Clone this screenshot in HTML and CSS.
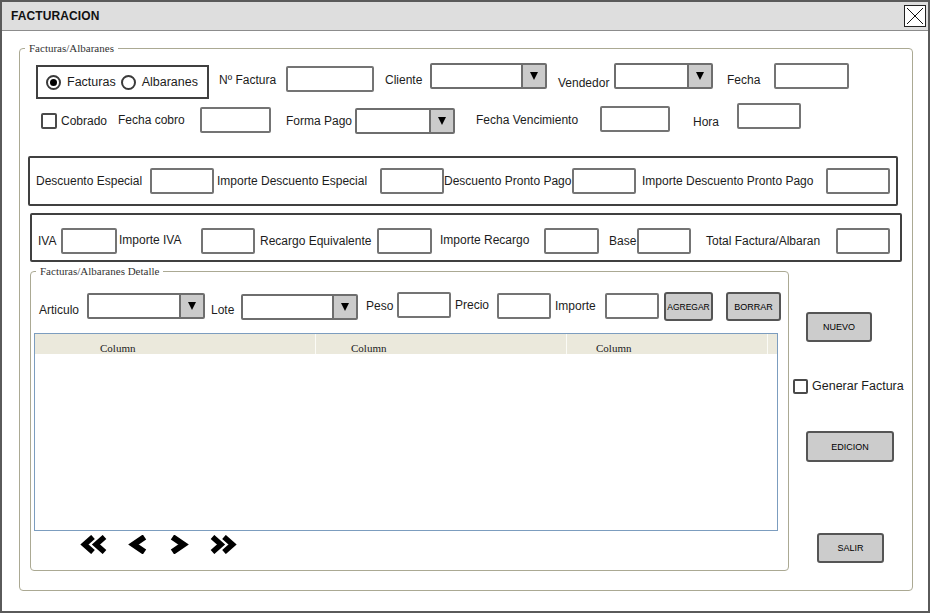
FILE: index.html
```html
<!DOCTYPE html>
<html lang="es">
<head>
<meta charset="utf-8">
<title>FACTURACION</title>
<link rel="stylesheet" href="styles.css">
</head>
<body>
<div class="window">
  <div class="titlebar">
    <span class="title">FACTURACION</span>
    <span class="close">
      <svg width="20" height="20" viewBox="0 0 20 20"><path d="M2 2 L18 18 M18 2 L2 18" stroke="#111" stroke-width="1" fill="none"/></svg>
    </span>
  </div>

  <div class="frame main-frame">
    <span class="legend">Facturas/Albaranes</span>

    <div class="row r1">
      <div class="radio-group ml16 mt2">
        <span class="radio on"></span><span class="rtext">Facturas</span>
        <span class="radio second"></span><span class="rtext">Albaranes</span>
      </div>
      <span class="lbl w63 ml10 mt9">Nº Factura</span>
      <span class="input w88 ml4 mt3"></span>
      <span class="lbl w40 ml11 mt9">Cliente</span>
      <span class="combo w117 ml5"><span class="combo-field"></span><span class="combo-btn"><i class="tri"></i></span></span>
      <span class="lbl w54 ml11 mt12">Vendedor</span>
      <span class="combo w99 ml2"><span class="combo-field"></span><span class="combo-btn"><i class="tri"></i></span></span>
      <span class="lbl w34 ml14 mt9">Fecha</span>
      <span class="input w75 ml13"></span>
    </div>

    <div class="row r2">
      <span class="check ml21 mt10"></span>
      <span class="lbl w47 ml4 mt10">Cobrado</span>
      <span class="lbl w69 ml10 mt9">Fecha cobro</span>
      <span class="input w71 ml13 mt4"></span>
      <span class="lbl w65 ml15 mt10">Forma Pago</span>
      <span class="combo w100 ml4 mt5"><span class="combo-field"></span><span class="combo-btn"><i class="tri"></i></span></span>
      <span class="lbl w105 ml21 mt9">Fecha Vencimiento</span>
      <span class="input w70 ml19 mt3"></span>
      <span class="lbl w28 ml23 mt11">Hora</span>
      <span class="input w64 ml16"></span>
    </div>

    <div class="group box3">
      <span class="lbl w108 ml6">Descuento Especial</span>
      <span class="input w64 ml6"></span>
      <span class="lbl w158 ml3">Importe Descuento Especial</span>
      <span class="input w64 ml5"></span>
      <span class="lbl w128">Descuento Pronto Pago</span>
      <span class="input w64"></span>
      <span class="lbl w178 ml6">Importe Descuento Pronto Pago</span>
      <span class="input w64 ml6"></span>
    </div>

    <div class="group box4">
      <span class="lbl w23 ml6">IVA</span>
      <span class="input w56"></span>
      <span class="lbl w75 ml2 up1">Importe IVA</span>
      <span class="input w54 ml7"></span>
      <span class="lbl w113 ml5">Recargo Equivalente</span>
      <span class="input w55 ml4"></span>
      <span class="lbl w96 ml8 up1">Importe Recargo</span>
      <span class="input w55 ml8"></span>
      <span class="lbl w27 ml10">Base</span>
      <span class="input w54 ml1"></span>
      <span class="lbl w126 ml15">Total Factura/Albaran</span>
      <span class="input w54 ml4"></span>
    </div>

    <div class="bottom">
      <div class="frame detail-frame">
        <span class="legend">Facturas/Albaranes Detalle</span>
        <div class="row r3">
          <span class="lbl w46 ml8 mt10">Articulo</span>
          <span class="combo w118 ml2 mt1"><span class="combo-field"></span><span class="combo-btn"><i class="tri"></i></span></span>
          <span class="lbl w26 ml6 mt10">Lote</span>
          <span class="combo w117 ml4 mt2"><span class="combo-field"></span><span class="combo-btn"><i class="tri"></i></span></span>
          <span class="lbl w26 ml8 mt6">Peso</span>
          <span class="input w54 ml5"></span>
          <span class="lbl w36 ml4 mt5">Precio</span>
          <span class="input w54 ml6 mt1"></span>
          <span class="lbl w48 ml4 mt6">Importe</span>
          <span class="input w54 ml2 mt1"></span>
          <span class="btn agregar w49 ml5">AGREGAR</span>
          <span class="btn w55 ml13">BORRAR</span>
        </div>

        <div class="table">
          <div class="thead">
            <span class="th c1">Column</span>
            <span class="th c2">Column</span>
            <span class="th c3">Column</span>
            <span class="th c4"></span>
          </div>
          <div class="tbody"></div>
        </div>

        <div class="pager">
          <svg class="nav" width="31" height="19" viewBox="0 0 31 19"><path d="M15 2 L6.5 9.5 L15 17 M26.5 2 L18 9.5 L26.5 17" stroke="#000" stroke-width="5.5" fill="none" stroke-linejoin="miter"/></svg>
          <svg class="nav gap18" width="21" height="19" viewBox="0 0 21 19"><path d="M17.5 2 L6.5 9.5 L17.5 17" stroke="#000" stroke-width="6" fill="none" stroke-linejoin="miter"/></svg>
          <svg class="nav gap21" width="21" height="19" viewBox="0 0 21 19"><path d="M3.5 2 L14.5 9.5 L3.5 17" stroke="#000" stroke-width="6" fill="none" stroke-linejoin="miter"/></svg>
          <svg class="nav gap18" width="31" height="19" viewBox="0 0 31 19"><path d="M4.5 2 L13 9.5 L4.5 17 M16 2 L24.5 9.5 L16 17" stroke="#000" stroke-width="5.5" fill="none" stroke-linejoin="miter"/></svg>
        </div>
      </div>

      <div class="side">
        <span class="btn nuevo">NUEVO</span>
        <div class="gen">
          <span class="check"></span>
          <span class="lbl ml4">Generar Factura</span>
        </div>
        <span class="btn edicion">EDICION</span>
        <span class="btn salir">SALIR</span>
      </div>
    </div>
  </div>
</div>
</body>
</html>
```

FILE: styles.css
```css
* { box-sizing: border-box; }
html, body { margin: 0; padding: 0; background: #fff; }
body {
  font-family: "Liberation Sans", Arial, sans-serif;
  font-size: 12px;
  color: #1c1c1c;
}

.window {
  width: 930px;
  height: 613px;
  border: 2px solid #5a5a5a;
  background: #fff;
  overflow: hidden;
}

.titlebar {
  height: 29px;
  background: #dedede;
  border-bottom: 1px solid #8c8c8c;
  display: flex;
  align-items: center;
  justify-content: space-between;
  padding: 0 2px 0 9px;
}
.title { font-weight: bold; font-size: 12px; color: #111; letter-spacing: 0.1px; }
.close {
  width: 22px;
  height: 22px;
  background: #fff;
  border: 1px solid #222;
  display: flex;
}

.frame {
  position: relative;
  border: 1px solid #aba993;
  border-radius: 4px;
}
.legend {
  position: absolute;
  top: -8px;
  left: 5px;
  padding: 0 4px;
  background: #fff;
  font-family: "Liberation Serif", "Times New Roman", serif;
  font-size: 11px;
  line-height: 14px;
  color: #333;
  white-space: nowrap;
}
.main-frame {
  margin: 17px 0 0 17px;
  width: 894px;
  height: 543px;
}

.row { display: flex; align-items: flex-start; }
.r1 { margin-top: 14px; }
.r2 { margin-top: 4px; }
.r3 { margin-top: 20px; }

.lbl {
  flex: none;
  display: block;
  line-height: 16px;
  height: 16px;
  white-space: nowrap;
}
.up1 { margin-bottom: 2px; }

.input {
  flex: none;
  display: block;
  height: 26px;
  border: 2px solid #747474;
  border-radius: 2px;
  background: #fff;
}

.combo {
  flex: none;
  display: flex;
  height: 26px;
  border: 2px solid #6e6e6e;
  border-radius: 2px;
  background: #fff;
}
.combo-field { flex: 1; }
.combo-btn {
  width: 24px;
  background: #cbcbcb;
  border-left: 2px solid #6e6e6e;
  display: flex;
  align-items: center;
  justify-content: center;
}
.tri {
  display: block;
  width: 0;
  height: 0;
  border-left: 4.5px solid transparent;
  border-right: 4.5px solid transparent;
  border-top: 8px solid #000;
}

.check {
  flex: none;
  display: block;
  width: 16px;
  height: 16px;
  border: 2px solid #4a4a4a;
  border-radius: 2px;
  background: #fff;
}

.radio-group {
  flex: none;
  display: flex;
  align-items: center;
  width: 173px;
  height: 34px;
  border: 2px solid #404040;
  padding-left: 8px;
  font-size: 12.5px;
}
.radio {
  flex: none;
  width: 15px;
  height: 15px;
  border: 2px solid #3a3a3a;
  border-radius: 50%;
  display: flex;
  align-items: center;
  justify-content: center;
}
.radio.on::after {
  content: "";
  width: 7px;
  height: 7px;
  border-radius: 50%;
  background: #000;
}
.radio.second { margin-left: 5px; }
.rtext { margin-left: 6px; white-space: nowrap; }

.group {
  display: flex;
  align-items: center;
  border: 2px solid #404040;
  border-radius: 2px;
}
.box3 { margin: 22px 0 0 8px; width: 870px; height: 50px; }
.box4 { margin: 7px 0 0 10px; width: 872px; height: 49px; padding-top: 7px; }

.bottom { display: flex; margin-top: 9px; }
.detail-frame { flex: none; margin-left: 10px; width: 759px; height: 300px; }

.btn {
  flex: none;
  display: flex;
  align-items: center;
  justify-content: center;
  height: 29px;
  background: #cccccc;
  border: 2px solid #555;
  border-radius: 3px;
  color: #000;
  font-size: 9px;
  white-space: nowrap;
}
.btn.agregar { font-size: 8.5px; }

.table {
  margin: 12px 0 0 3px;
  width: 744px;
  height: 198px;
  border: 1px solid #7c9dbf;
  background: #fff;
}
.thead {
  display: flex;
  height: 20px;
  background: #ebe9dc;
}
.th {
  flex: none;
  height: 20px;
  padding-top: 8px;
  font-family: "Liberation Serif", "Times New Roman", serif;
  font-size: 11px;
  line-height: 12px;
  color: #222;
  border-right: 1px solid #fbfbf6;
  white-space: nowrap;
}
.c1 { width: 281px; padding-left: 65px; }
.c2 { width: 251px; padding-left: 35px; }
.c3 { width: 201px; padding-left: 29px; }
.c4 { width: 9px; border-right: none; }

.pager { display: flex; margin: 4px 0 0 47px; }
.nav { flex: none; display: block; }
.gap18 { margin-left: 18px; }
.gap21 { margin-left: 21px; }

.side { flex: 1; display: flex; flex-direction: column; align-items: flex-start; }
.nuevo { width: 66px; height: 30px; margin: 41px 0 0 17px; }
.gen { display: flex; align-items: center; margin: 36px 0 0 4px; font-size: 12.5px; }
.gen .check { width: 15px; height: 15px; }
.edicion { width: 88px; height: 31px; margin: 37px 0 0 17px; }
.salir { width: 67px; height: 30px; margin: 71px 0 0 28px; }

/* widths */
.w23 { width: 23px; } .w26 { width: 26px; } .w27 { width: 27px; } .w28 { width: 28px; }
.w34 { width: 34px; } .w36 { width: 36px; } .w40 { width: 40px; } .w46 { width: 46px; }
.w47 { width: 47px; } .w48 { width: 48px; } .w49 { width: 49px; } .w54 { width: 54px; }
.w55 { width: 55px; } .w56 { width: 56px; } .w63 { width: 63px; } .w64 { width: 64px; }
.w65 { width: 65px; } .w69 { width: 69px; } .w70 { width: 70px; } .w71 { width: 71px; }
.w75 { width: 75px; } .w88 { width: 88px; } .w96 { width: 96px; } .w99 { width: 99px; }
.w100 { width: 100px; } .w105 { width: 105px; } .w108 { width: 108px; } .w113 { width: 113px; }
.w117 { width: 117px; } .w118 { width: 118px; } .w126 { width: 126px; } .w128 { width: 128px; }
.w158 { width: 158px; } .w178 { width: 178px; }

/* left margins */
.ml1 { margin-left: 1px; } .ml2 { margin-left: 2px; } .ml3 { margin-left: 3px; }
.ml4 { margin-left: 4px; } .ml5 { margin-left: 5px; } .ml6 { margin-left: 6px; }
.ml7 { margin-left: 7px; } .ml8 { margin-left: 8px; } .ml10 { margin-left: 10px; }
.ml11 { margin-left: 11px; } .ml13 { margin-left: 13px; } .ml14 { margin-left: 14px; }
.ml15 { margin-left: 15px; } .ml16 { margin-left: 16px; } .ml19 { margin-left: 19px; }
.ml21 { margin-left: 21px; } .ml23 { margin-left: 23px; }

/* top margins */
.mt1 { margin-top: 1px; } .mt2 { margin-top: 2px; } .mt3 { margin-top: 3px; }
.mt4 { margin-top: 4px; } .mt5 { margin-top: 5px; } .mt6 { margin-top: 6px; }
.mt9 { margin-top: 9px; } .mt10 { margin-top: 10px; } .mt11 { margin-top: 11px; }
.mt12 { margin-top: 12px; }
```
